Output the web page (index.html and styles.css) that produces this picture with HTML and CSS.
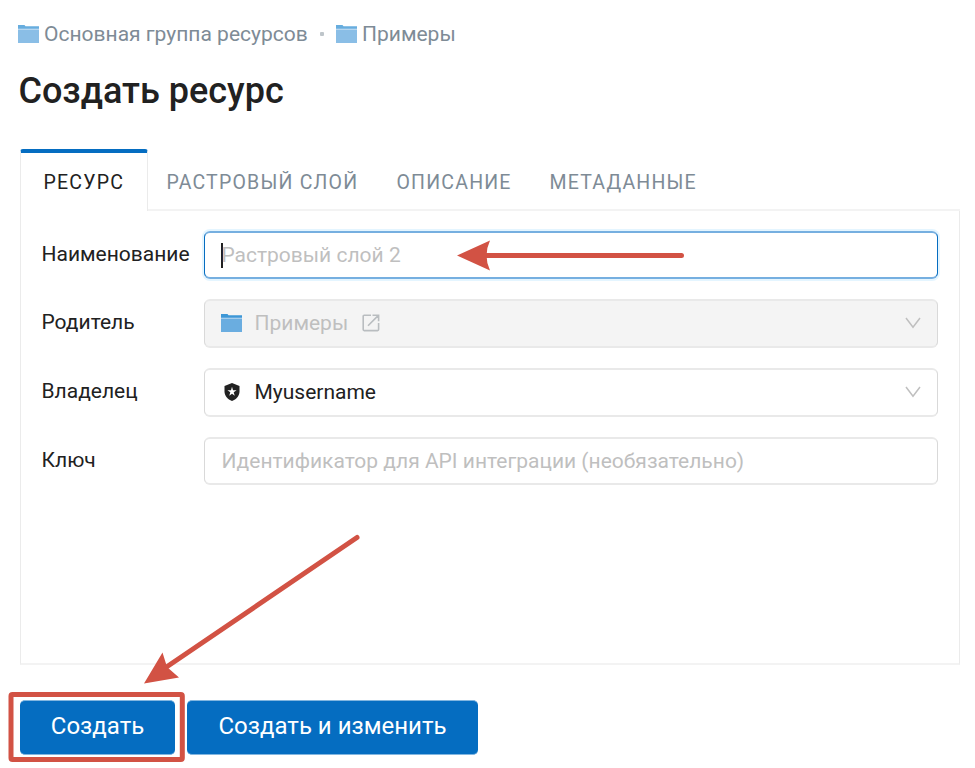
FILE: index.html
```html
<!DOCTYPE html>
<html lang="ru">
<head>
<meta charset="utf-8">
<title>Создать ресурс</title>
<link rel="stylesheet" href="styles.css">
</head>
<body>
<svg class="defs" width="0" height="0">
  <symbol id="folder" viewBox="0 0 21 18">
    <path class="folder-tab" d="M0 0h6.5l1 1.2H21V4H0z"/>
    <path class="folder-body" d="M0 3.200h21V18H0z"/>
    <path class="folder-line" d="M0 4h21v1H0z"/>
  </symbol>
  <symbol id="chevron" viewBox="0 0 16 12">
    <path d="M1 1l7 9.3L15 1" fill="none" stroke="currentColor" stroke-width="1.5"/>
  </symbol>
</svg>
<nav class="crumbs">
  <svg class="folder"><use href="#folder"/></svg>
  <a class="crumb crumb-root">Основная группа ресурсов</a>
  <span class="dot"></span>
  <svg class="folder"><use href="#folder"/></svg>
  <a class="crumb">Примеры</a>
</nav>
<h1>Создать ресурс</h1>
<div class="tabs">
  <div class="tab active"><span>РЕСУРС</span></div>
  <div class="tab raster"><span>РАСТРОВЫЙ СЛОЙ</span></div>
  <div class="tab descr"><span>ОПИСАНИЕ</span></div>
  <div class="tab meta"><span>МЕТАДАННЫЕ</span></div>
</div>
<main class="panel">
  <div class="row">
    <label>Наименование</label>
    <div class="field focused"><span class="caret"></span><span class="hint">Растровый слой 2</span></div>
  </div>
  <div class="row">
    <label>Родитель</label>
    <div class="field disabled tall">
      <svg class="folder"><use href="#folder"/></svg>
      <span class="value">Примеры</span>
      <svg class="open" viewBox="0 0 18 18"><path d="M9 1.2H2.2a1 1 0 0 0-1 1v13.4a1 1 0 0 0 1 1h13.4a1 1 0 0 0 1-1V9M10.5 1.2h6.1v6.1M16.4 1.4L6 11.8"/></svg>
      <svg class="chevron"><use href="#chevron"/></svg>
    </div>
  </div>
  <div class="row">
    <label>Владелец</label>
    <div class="field tall">
      <svg class="shield" viewBox="0 0 16 18"><path fill="#212121" d="M8 0l7.5 3v5.500c0 4.300-3.200 8-7.500 9.500C3.700 16.500.5 12.800.5 8.500V3z"/><path fill="#fff" d="M8 3.800l1 3.450 3.550-.05-2.850 2.100 1.050 3.400L8 10.700l-2.750 2 1.050-3.400L3.450 7.200l3.550.05z"/></svg>
      <span class="value">Myusername</span>
      <svg class="chevron"><use href="#chevron"/></svg>
    </div>
  </div>
  <div class="row">
    <label>Ключ</label>
    <div class="field"><span class="hint">Идентификатор для API интеграции (необязательно)</span></div>
  </div>
</main>
<footer class="actions">
  <button class="create">Создать</button>
  <button class="edit">Создать и изменить</button>
</footer>
<svg class="marks" width="975" height="768" viewBox="0 0 975 768">
  <path class="shaft" d="M681.500 255.500H485M357 537.500L165 668"/>
  <path class="head" d="M457 255.500L490 240.500Q483 255.500 490 270.500zM144 683.500L162.500 652.500L167 667L179 677.500z"/>
  <rect class="frame" x="11" y="694.500" width="171.300" height="65" rx="1.500"/>
</svg>
</body>
</html>
```
FILE: styles.css
```css
* { box-sizing: border-box; }
body {
  margin: 0;
  width: 975px;
  height: 768px;
  overflow: hidden;
  background: #fff;
  color: #212121;
  font: 21px/30px Roboto, sans-serif;
}
.defs { position: absolute; }
.folder { width: 21px; height: 18px; flex: none; }
.folder-tab { fill: #3d97d6; }
.folder-line { fill: #a5cdec; }
.folder-body { fill: #6aade0; }

.crumbs { display: flex; align-items: center; height: 30px; margin: 19px 0 0 18px; color: #7e8b96; }
.crumbs .folder { opacity: .78; }
.crumb { margin-left: 5px; white-space: nowrap; }
.crumb-root { width: 264px; }
.dot { width: 4px; height: 4px; margin: 0 12px; border-radius: 1px; background: #bec5ca; }
h1 { margin: 18px 0 0 18.4px; height: 48px; font-size: 36px; line-height: 48px; font-weight: 500; white-space: nowrap; }

.tabs { display: flex; margin: 34px 15px 0 20px; height: 62px; color: #7e8b96; font-size: 19.5px; letter-spacing: 1.2px; line-height: 32px; white-space: nowrap; }
.tab { padding-top: 18px; border-bottom: 2px solid #f3f3f3; }
.active { width: 128px; padding: 14px 0 0 22.5px; color: #212121; border: solid #ebebeb; border-width: 4px 1px 0; border-top-color: #056dc1; border-radius: 3px 3px 0 0; }
.raster { width: 230px; padding-left: 18.5px; }
.descr { width: 153px; padding-left: 18.5px; }
.meta { flex: 1; padding-left: 18.5px; }

.panel { margin: 0 15px 0 20px; height: 454px; padding: 20px 21px 0 20px; border: solid #ebebeb; border-width: 0 1px 2px; border-bottom-color: #f3f3f3; display: flex; flex-direction: column; gap: 20px; }
.row { display: flex; }
label { width: 163px; padding: 8px 0 0 .5px; flex: none; white-space: nowrap; }
.field { flex: 1; height: 48px; display: flex; align-items: center; padding: 0 16px; border: solid; border-width: 2px 1px; border-color: #e9e9e9 #d9d9d9; border-radius: 6px; white-space: nowrap; }
.tall { height: 49px; }
.focused { border-color: #76afe0 #056dc1; box-shadow: 0 0 0 2px #e4f5ff; }
.disabled { background: #f4f4f4; color: #bfbfbf; }
.hint { margin-left: .4px; color: #bfbfbf; }
.caret { width: 2px; height: 25px; background: #212121; margin-right: -2px; }
.value { margin: 0 0 2px 12.5px; }
.tall > svg { position: relative; top: -1px; }
.open { width: 18px; height: 18px; margin-left: 13.5px; fill: none; stroke: #b9bdc0; stroke-width: 1.600; }
.shield { width: 16px; height: 18px; margin: 0 2.500px 0 2.500px; }
.chevron { width: 16px; height: 12px; margin-left: auto; color: #bfbfbf; }

.actions { display: flex; gap: 12px; margin: 35px 0 0 20px; }
button { height: 55px; padding: 0 0 3px; border: solid #82b6e0; border-width: 1px 0; border-radius: 5px; background: #056dc1; color: #fff; font: 24px/50px Roboto, sans-serif; }
.create { width: 155px; }
.edit { width: 291px; }

.marks { position: absolute; left: 0; top: 0; pointer-events: none; }
.shaft { fill: none; stroke: #d25244; stroke-width: 5; stroke-linecap: round; }
.head { fill: #d25244; }
.frame { fill: none; stroke: #d25244; stroke-width: 5; }
```
